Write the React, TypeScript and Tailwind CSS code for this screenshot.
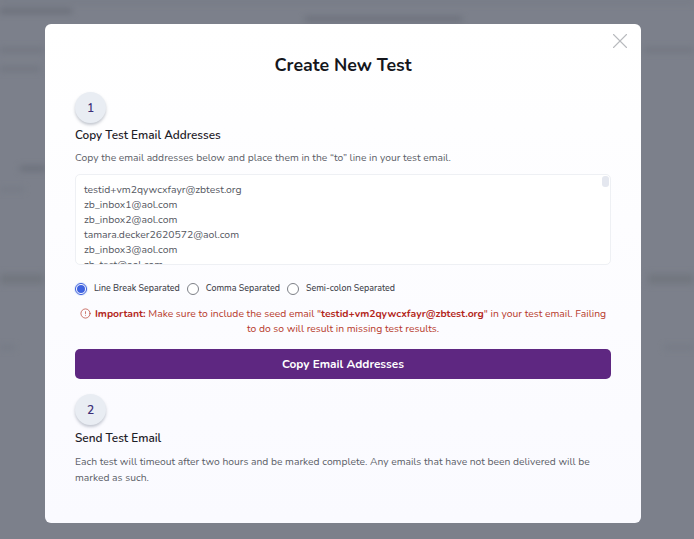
import { CircleAlert, X } from "lucide-react";

const emails = [
  "testid+vm2qywcxfayr@zbtest.org",
  "zb_inbox1@aol.com",
  "zb_inbox2@aol.com",
  "tamara.decker2620572@aol.com",
  "zb_inbox3@aol.com",
  "zb_test@aol.com",
];

const StepBadge = ({ value }: { value: string }) => (
  <div className="flex h-[31px] w-[31px] items-center justify-center rounded-full bg-[#e9edf3] text-[12px] font-semibold tabular-nums text-[#3c2f78] shadow-[0_2px_3px_rgba(90,100,120,0.35)]">
    {value}
  </div>
);

const Radio = ({ label, checked }: { label: string; checked?: boolean }) => (
  <div className="flex items-center gap-[7px]">
    {checked ? (
      <div className="flex h-3 w-3 items-center justify-center rounded-full border border-[#3b5bdb] bg-white shadow-[0_0_0_1px_#e3edfb]">
        <div className="h-2 w-2 rounded-full bg-[#3f63e0]" />
      </div>
    ) : (
      <div className="h-3 w-3 rounded-full border border-[#7d8087] bg-white" />
    )}
    <span className="text-[8.9px] font-medium text-[#3f424a]">{label}</span>
  </div>
);

const Backdrop = () => (
  <div className="h-[539px] overflow-hidden bg-[#7c808b]">
    <div className="flex flex-col blur-[3px]">
      <div className="h-[3px] w-full bg-[#757984]" />
      <div className="mt-[6px] h-[4px] w-[72px] bg-[#666a75]" />
      <div className="ml-[305px] mt-[4px] h-[4px] w-[157px] bg-[#686c77]" />
      <div className="mt-[27px] flex justify-between">
        <div className="h-[4px] w-[44px] bg-[#70747f]" />
        <div className="h-[4px] w-[50px] bg-[#70747f]" />
      </div>
      <div className="mt-[15px] h-[4px] w-[40px] bg-[#70747f]" />
      <div className="ml-[20px] mt-[95px] h-[5px] w-[26px] bg-[#6b6f7a]" />
      <div className="mt-[17px] h-[3px] w-[24px] bg-[#747883]" />
      <div className="mt-[83px] flex justify-between">
        <div className="h-[10px] w-[44px] bg-[#72767f]" />
        <div className="h-[10px] w-[46px] bg-[#72767f]" />
      </div>
      <div className="mt-[62px] flex justify-between">
        <div className="h-[3px] w-[15px] bg-[#747883]" />
        <div className="h-[3px] w-[30px] bg-[#747883]" />
      </div>
    </div>
  </div>
);

const App = () => {
  return (
    <div className="relative h-[539px] w-[694px] overflow-hidden font-['Nunito','Noto_Sans',sans-serif]">
      <Backdrop />
      <div className="absolute left-[45px] top-[24px] flex h-[499px] w-[596px] flex-col rounded-[6px] bg-gradient-to-b from-white to-[#fafaff] px-[30px] pt-[30px]">
        <button className="absolute right-[8px] top-[4px] text-[#b8babe]">
          <X size={26} strokeWidth={1} />
        </button>
        <h1 className="text-center text-[17.8px] font-bold leading-[22px] text-[#14161c]">Create New Test</h1>
        <div className="mt-[16px]">
          <StepBadge value="1" />
        </div>
        <h2 className="mt-[4px] text-[11.8px] font-semibold leading-[17px] text-[#1d2027]">Copy Test Email Addresses</h2>
        <p className="mt-[6px] text-[10.3px] leading-[16px] text-[#5c5f68]">
          Copy the email addresses below and place them in the “to” line in your test email.
        </p>
        <div className="relative mt-[8px] h-[91px] overflow-hidden rounded-[5px] border border-[#eef0f4] bg-white px-2 pt-[7px]">
          {emails.map((email) => (
            <div key={email} className="text-[10.4px] leading-[15px] text-[#55585f]">
              {email}
            </div>
          ))}
          <div className="absolute right-[1px] top-[1px] h-[11px] w-[7px] rounded-[3px] bg-[#e4e7ef]" />
        </div>
        <div className="mt-[17px] flex items-center gap-[7px]">
          <Radio label="Line Break Separated" checked />
          <Radio label="Comma Separated" />
          <Radio label="Semi-colon Separated" />
        </div>
        <p className="mt-[12px] text-center text-[10.35px] leading-[15px] text-[#b73a2c]">
          <CircleAlert size={11} strokeWidth={1.5} className="mr-[4px] inline align-[-1.5px]" />
          <strong className="font-bold text-[#b3261a]">Important:</strong> Make sure to include the seed email "
          <strong className="font-bold text-[#b3261a]">testid+vm2qywcxfayr@zbtest.org</strong>" in your test email. Failing
          to do so will result in missing test results.
        </p>
        <button className="mt-[12px] h-[30px] shrink-0 rounded-[5px] bg-[#5e2781] text-[11.8px] font-bold text-white">
          Copy Email Addresses
        </button>
        <div className="mt-[15px]">
          <StepBadge value="2" />
        </div>
        <h2 className="mt-[5px] text-[11.8px] font-semibold leading-[17px] text-[#1d2027]">Send Test Email</h2>
        <p className="mt-[7px] text-[10.3px] leading-[16px] text-[#5c5f68]">
          Each test will timeout after two hours and be marked complete. Any emails that have not been delivered will be marked as such.
        </p>
      </div>
    </div>
  );
};

export default App;
